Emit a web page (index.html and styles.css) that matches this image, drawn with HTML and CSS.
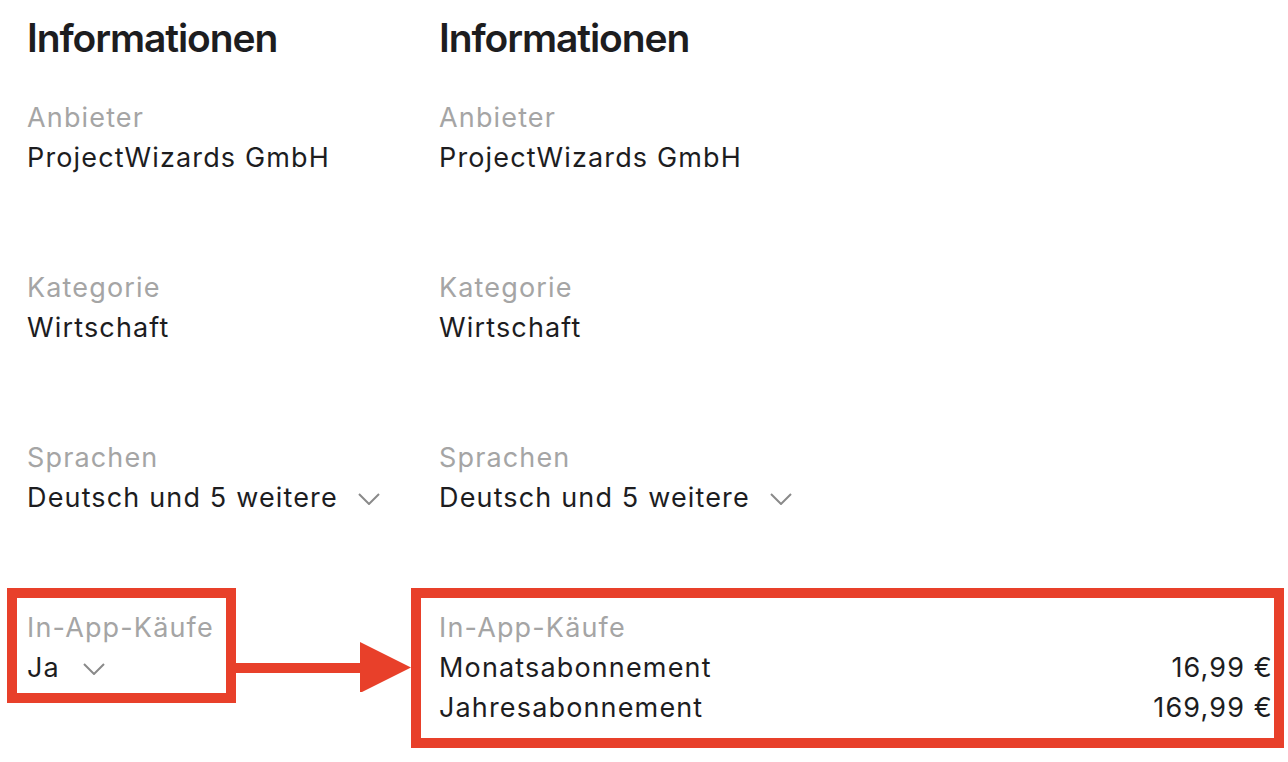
FILE: index.html
```html
<!DOCTYPE html>
<html lang="de">
<head>
<meta charset="utf-8">
<title>Informationen</title>
<link rel="stylesheet" href="styles.css">
</head>
<body>
<div class="page">
  <section class="col col-left">
    <h2 class="title">Informationen</h2>
    <div class="field">
      <div class="label">Anbieter</div>
      <div class="value">ProjectWizards GmbH</div>
    </div>
    <div class="field">
      <div class="label">Kategorie</div>
      <div class="value">Wirtschaft</div>
    </div>
    <div class="field">
      <div class="label">Sprachen</div>
      <div class="value">Deutsch und 5 weitere<svg class="chev" viewBox="0 0 22 12" width="22" height="12"><polyline points="1,1 11,11 21,1"/></svg></div>
    </div>
    <div class="field field-boxed box-left">
      <div class="label">In-App-Käufe</div>
      <div class="value">Ja<svg class="chev chev-ja" viewBox="0 0 22 12" width="22" height="12"><polyline points="1,1 11,11 21,1"/></svg></div>
    </div>
  </section>
  <section class="col col-right">
    <h2 class="title">Informationen</h2>
    <div class="field">
      <div class="label">Anbieter</div>
      <div class="value">ProjectWizards GmbH</div>
    </div>
    <div class="field">
      <div class="label">Kategorie</div>
      <div class="value">Wirtschaft</div>
    </div>
    <div class="field">
      <div class="label">Sprachen</div>
      <div class="value">Deutsch und 5 weitere<svg class="chev" viewBox="0 0 22 12" width="22" height="12"><polyline points="1,1 11,11 21,1"/></svg></div>
    </div>
    <div class="field field-boxed box-right">
      <div class="label">In-App-Käufe</div>
      <div class="row"><span>Monatsabonnement</span><span>16,99 €</span></div>
      <div class="row"><span>Jahresabonnement</span><span>169,99 €</span></div>
    </div>
  </section>
  <svg class="arrow" viewBox="0 0 175 50" width="175" height="50">
    <rect x="0" y="21" width="126" height="10"/>
    <polygon points="124,0 175,25.5 124,51"/>
  </svg>
</div>
</body>
</html>
```
FILE: styles.css
```css
html, body {
  margin: 0;
  padding: 0;
  background: #ffffff;
}
body {
  font-family: Inter, "Noto Sans", "Liberation Sans", sans-serif;
  color: #1d1d1f;
}
.page {
  position: relative;
  display: flex;
  padding: 14px 0 0 27px;
}
.col-left {
  width: 412px;
}
.col-right {
  width: 832px;
}
.title {
  margin: 0 0 36px 0;
  font-size: 39px;
  line-height: 48px;
  font-weight: 600;
  letter-spacing: -1.1px;
  color: #1d1d1f;
}
.field {
  font-size: 27px;
  line-height: 40px;
  letter-spacing: 1.15px;
  margin-bottom: 90px;
}
.field:last-child {
  margin-bottom: 0;
}
.label {
  color: #a5a5a5;
}
.value {
  display: flex;
  align-items: center;
}
.chev {
  margin-left: 20px;
  fill: none;
  stroke: #8a8a8a;
  stroke-width: 2;
  margin-top: 2px;
}
.chev-ja {
  margin-left: 23px;
}
.field-boxed {
  margin-top: -20px;
  border: 10px solid #e8402a;
  padding-top: 10px;
}
.box-left {
  width: 189px;
  margin-left: -20px;
  padding: 10px 10px 5px 10px;
}
.box-right {
  margin-left: -28px;
  margin-right: -13px;
  padding: 10px 1px 10px 18px;
}
.row {
  display: flex;
  justify-content: space-between;
}
.arrow {
  position: absolute;
  left: 236px;
  top: 642px;
  fill: #e8402a;
}
```
